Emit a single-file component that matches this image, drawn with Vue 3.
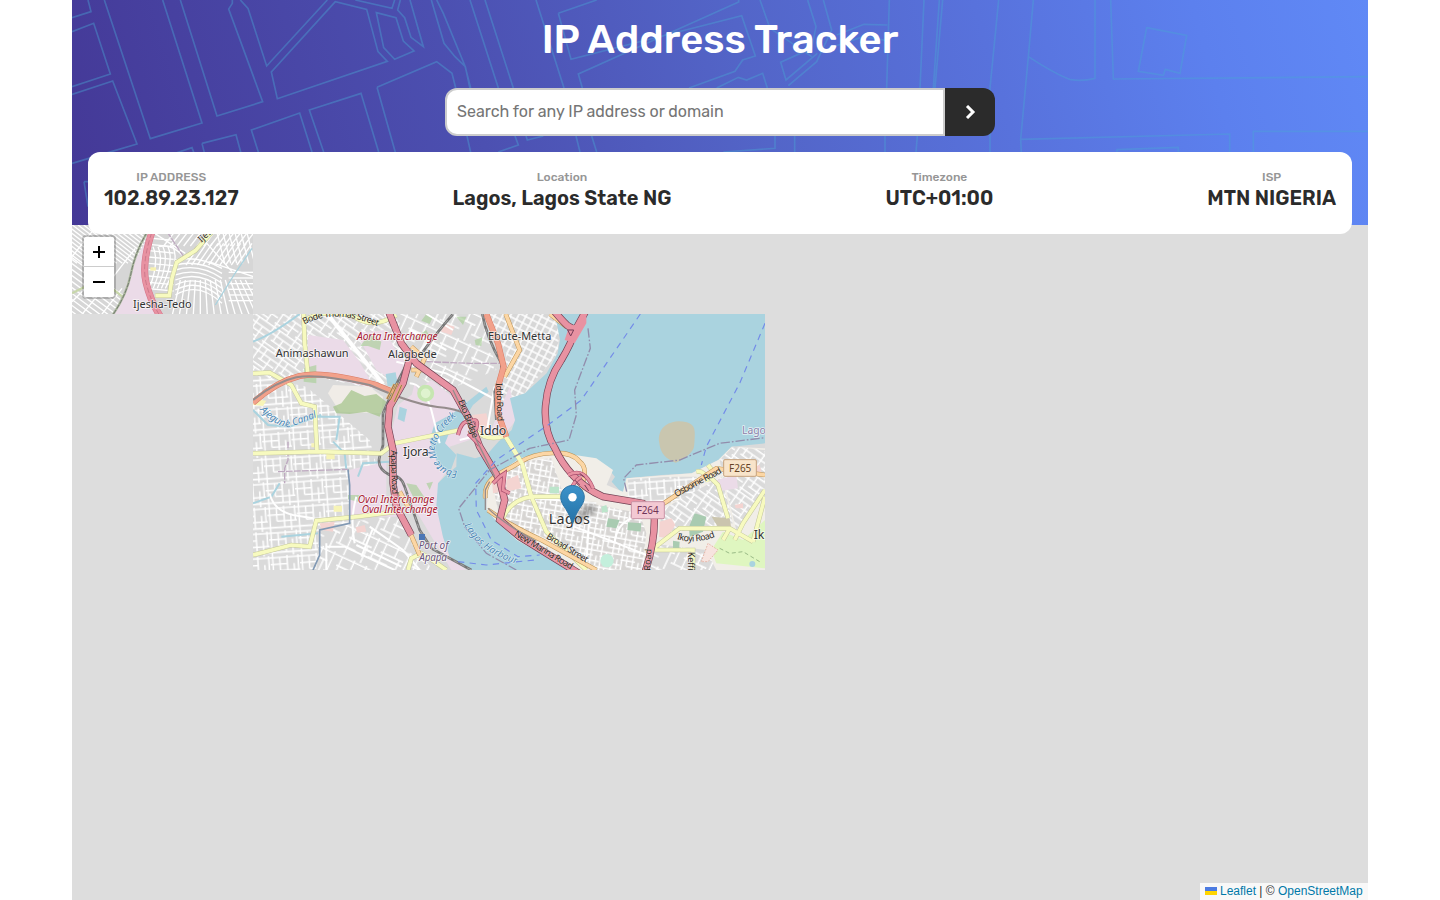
<script setup>
const details = [
  { label: 'IP ADDRESS', value: '102.89.23.127', key: 'ip' },
  { label: 'Location', value: 'Lagos, Lagos State NG', key: 'location' },
  { label: 'Timezone', value: 'UTC+01:00', key: 'timezone' },
  { label: 'ISP', value: 'MTN NIGERIA', key: 'isp' },
]
</script>

<template>
  <main class="page">
    <header class="hero">
      <svg class="hero-lines" viewBox="0 0 3888 675" aria-hidden="true">
        <path d="M0 53L57 35 48 0M0 95L65 70 115 222 0 260M0 283L122 243 195 432 110 457 0 490M97 0L235 416 390 369 272 0M325 0L435 348 572 305 470 27 481 10V0M505 0L528 25 584 198 766 0M790 5L598 216 616 296 946 184 918 155 884 28ZM850 0L960 25 968 0M985 0L977 30 998 53 1017 112 1054 140 1014 0M913 38L972 53 994 123 1026 153 968 178 935 143ZM1078 0L1116 130 1149 170 1180 200 1195 270M1094 0L1114 40 1179 198 1196 264M915 262L1094 185 1140 220 1170 340 1200 475M915 262L975 475M720 456L683 339 538 390 565 475M755 456L712 330 867 280 920 456M390 430L492 404 510 470M390 430L400 470M250 480L360 443 370 470M36 545L48 620M36 545H48" />
        <g transform="translate(1104 0)"><path d="M90 0L175 264M135 0L220 264M288 0L372 264M355 40L470 0M355 40L393 178 905 47 946 168 908 180 885 214 747 264M896 0L896 6 415 222 427 264M830 264L895 232 920 240 968 220 982 264M960 0L990 85 1115 170M1103 0L1128 80 1115 145 1022 187 1038 240 1132 160M1150 0L1175 90 1130 185 1045 257M1342 75L1272 73 1190 105M1342 122L1270 110 1180 140M1348 0L1340 264M1452 0L1440 264M1498 0L1480 264M1508 0L1485 264M225 408L235 435 175 456M258 408L262 420 310 408M408 408L420 456M455 408L470 456M1005 408V445L850 456M1064 408V456M1335 408V456M1432 408L1428 456" /></g>
        <g transform="translate(2940 0)"><path d="M56 0L30 264V456M160 0L145 170 122 418 124 456M145 170Q230 225 272 239 308 245 345 235V0M392 0L400 237 1164 230M500 83L620 106 600 220 556 208 550 226 475 214ZM122 418L749 402V456M411 456V449L595 442V456M1164 394H820V456" transform="translate(-216 0)" /></g>
      </svg>
      <h1>IP Address Tracker</h1>
      <form class="search" @submit.prevent>
        <input type="text" placeholder="Search for any IP address or domain" aria-label="IP address or domain" />
        <button type="submit" aria-label="Search">
          <svg width="11" height="14" viewBox="0 0 11 14"><path d="M2 1l6 6-6 6" fill="none" stroke="#fff" stroke-width="3" /></svg>
        </button>
      </form>
      <section class="details">
        <div v-for="item in details" :key="item.key" class="detail" :class="item.key">
          <span class="label">{{ item.label }}</span>
          <strong>{{ item.value }}</strong>
        </div>
      </section>
    </header>

    <section class="map">
      <svg class="tiles" width="693" height="345" viewBox="0 0 693 345">
        <defs>
          <clipPath id="tile-main"><rect x="181" y="89" width="512" height="256" /></clipPath>
          <clipPath id="tile-corner"><rect width="181" height="89" /></clipPath>
          <pattern id="streets-a" width="88" height="74" patternUnits="userSpaceOnUse" patternTransform="rotate(-4)">
            <rect width="88" height="74" fill="#dadada" />
            <path d="M0 6H88M0 26H48M28 45H88M0 64H88M7 0V74M28 6V45M50 0V64M70 26V74M83 0V45" class="grid" />
          </pattern>
          <pattern id="streets-b" width="75" height="66" patternUnits="userSpaceOnUse" patternTransform="rotate(35)">
            <rect width="75" height="66" fill="#dadada" />
            <path d="M0 5H75M0 24H75M20 43H75M7 0V66M28 5V43M52 24V66M52 0V5M0 59H52" class="grid" />
          </pattern>
          <pattern id="streets-c" width="21" height="21" patternUnits="userSpaceOnUse" patternTransform="rotate(27)">
            <rect width="21" height="21" fill="#d7d7d7" />
            <path d="M0 3H21M3 0V21" class="grid" />
          </pattern>
          <pattern id="streets-d" width="104" height="92" patternUnits="userSpaceOnUse" patternTransform="rotate(25)">
            <rect width="104" height="92" fill="#dadada" />
            <path d="M0 7H104M30 36H104M0 65H64M10 0V65M37 7V92M75 0V36M92 36V92" class="grid" />
          </pattern>
          <pattern id="streets-e" width="64" height="48" patternUnits="userSpaceOnUse" patternTransform="rotate(10)">
            <rect width="64" height="48" fill="#d7d5d3" />
            <path d="M0 4H64M0 19H44M20 35H64M4 0V48M19 4V35M37 0V48M54 19V48" class="grid" />
          </pattern>
          <path id="bode" d="M154 44Q245 -6 372 48" />
          <path id="canal" d="M20 300Q60 345 105 352 145 340 207 315" />
          <path id="creek" d="M613 482Q553 485 545 410 565 350 625 308" />
          <path id="harbour" d="M634 646Q680 732 805 766" />
          <path id="marina" d="M782 676L955 780" />
          <path id="broad" d="M878 684L1005 762" />
          <path id="osborne" d="M1270 561L1409 487" />
          <path id="ikoyi" d="M1271 687Q1330 705 1392 678" />
        </defs>

        <g clip-path="url(#tile-corner)">
          <rect width="181" height="89" fill="#d6d6d6" />
          <g transform="scale(.3333)">
            <g class="corner-streets">
              <path v-for="n in 24" :key="'d' + n" :d="`M${n * 17 - 220} 0l150 115`" />
              <path v-for="n in 16" :key="'s' + n" :d="`M-60 ${n * 18 + 35}l215 160`" />
              <path d="M0 95L60 20 90 0M20 280L120 160 190 70M80 280L150 190M0 230L60 170" />
            </g>
            <path d="M235 0H620V280H245L215 170Z" fill="#d6d6d6" />
            <g class="corner-streets">
              <path v-for="n in 9" :key="'l' + n" :d="`M230 ${n * 19 + 20}l75 7`" />
              <path v-for="n in 5" :key="'v' + n" :d="`M${n * 15 + 228} 65Q${n * 15 + 248} 110 ${n * 12 + 220} 190`" />
              <path v-for="n in 14" :key="'r' + n" :d="`M${n * 21 + 280} 270L${n * 15 + 310} 165`" />
              <path v-for="n in 8" :key="'q' + n" :d="`M310 ${n * 15 + 90}Q380 ${n * 11 + 80} 450 ${n * 15 + 115}`" />
              <path v-for="n in 10" :key="'b' + n" :d="`M${n * 17 + 370} 55l-45 65`" />
              <path v-for="n in 6" :key="'e' + n" :d="`M470 ${n * 17 + 125}H560`" />
              <path v-for="n in 13" :key="'t' + n" :d="`M${n * 20 + 300} 5l-45 58`" />
              <path v-for="n in 8" :key="'u' + n" :d="`M${n * 18 + 415} 15l25 100`" />
              <path d="M240 20L340 85M400 50L480 140M410 110L560 160M260 65Q300 55 335 95" />
            </g>
            <path d="M183 120L230 30 215 110 218 190 248 250 265 270H125L150 220Z" fill="#ebdbe8" />
            <path d="M0 205L60 175M120 190L155 218" stroke="#c8d7ab" stroke-width="7" />
            <path d="M540 70L486 150 430 240" class="stream thin-stream" />
            <path d="M225 22Q190 80 177 145T122 270" fill="none" stroke="#a9b69b" stroke-width="7" />
            <path d="M225 22Q190 80 177 145T122 270" fill="none" stroke="#737971" stroke-width="3" stroke-dasharray="14 4" />
            <path d="M285 20L335 95" class="railway" />
            <path d="M430 10L370 77 314 112 300 160 292 212H250" class="road-case" />
            <path d="M430 10L370 77 314 112 300 160 292 212H250" class="yellow" />
            <path d="M247 0Q207 110 222 172T269 280" class="soft-case" />
            <path d="M247 0Q207 110 222 172T269 280" class="red" />
            <path d="M247 0Q207 110 222 172T269 280" fill="none" stroke="#bd6c81" stroke-width="2" stroke-dasharray="16 8" />
            <path d="M235 127h17v10h-17z" fill="#f7f1ae" />
            <text x="183" y="248" textLength="176" class="place">Ijesha-Tedo</text>
            <text transform="translate(388 53) rotate(-42)" class="road-name">Ijesha</text>
          </g>
        </g>

        <g clip-path="url(#tile-main)">
          <g transform="translate(181 85) scale(.33333)">
            <rect y="12" width="1536" height="768" fill="#dadada" />
            <path d="M0 12H430L470 150 380 240 160 195 0 260Z" fill="url(#streets-b)" />
            <path d="M0 195L160 230 350 390 380 500 280 660 200 780H0Z" fill="url(#streets-a)" />
            <path d="M430 12H690L730 180 560 250 470 170Z" fill="url(#streets-d)" />
            <path d="M200 650L435 615 500 730 540 780H190Z" fill="url(#streets-d)" />
            <path d="M700 12H922L914 130 816 250 740 300 760 130Z" fill="url(#streets-c)" />

            <!-- land use -->
            <g class="industrial">
              <path d="M165 75L270 90 320 155 365 235 165 190Z" />
              <path d="M310 70L395 60 425 115 455 150 435 220 370 180Z" />
              <path d="M310 475L400 455V590L440 620H290V480Z" />
              <path d="M435 285L535 210 650 300 650 390 590 410 585 480 555 520 555 590 570 680 590 740 640 780 595 780 500 620 430 540 415 370Z" />
              <path d="M770 230L790 330 740 390 710 370Z" />
              <path d="M485 220L530 330 450 360Z" />
            </g>
            <path d="M240 225L350 230 390 260 385 310 260 305 225 250Z" fill="#f0ece7" />
            <g fill="#add19e" opacity=".7">
              <path d="M240 290L265 280 295 240 335 258 370 252 400 275 380 320 340 305 290 312 250 310Z" fill="#a3c488" />
              <path d="M153 175L190 165 190 220 152 215ZM322 108L350 70 385 95 380 120 345 108ZM475 90L520 60 535 90ZM520 12L540 20 530 42 505 32ZM665 90L688 82 685 108 668 105Z" />
              <path d="M460 520L490 525 520 570 485 570ZM520 520L540 515 530 540ZM610 20L640 20 630 45ZM285 555L325 555 315 575 285 568Z" />
            </g>
            <g fill="#f4d4d1"><path d="M200 640L245 635 240 665 205 660ZM308 652L335 645 340 665 312 668ZM570 40L605 50 595 75 565 65ZM655 315L700 310 715 375 680 370Z" /></g>
            <g fill="#f7f4b7"><path d="M220 430h25v18h-25zM175 400h20v12h-20zM242 587h25v18h-25zM5 268l35 4-10 16-30-3z" /></g>

            <!-- water -->
            <path class="water" d="M906 12L921 90 914 130 881 190 816 250 771 265 786 330 776 360 736 395 701 435 666 445 611 430 610 470 585 490 555 520 550 590 570 680 590 740 650 780H981L881 740 791 690 736 640 701 600 693 550 706 510 801 445 901 425 981 440 1061 470 1086 500 1076 515 1106 548 1118 545 1121 505 1226 495 1316 490 1396 450 1436 410 1536 400V12Z" />
            <path class="water" d="M530 390L545 340 600 310 650 270 700 230 707 245 660 285 620 350 590 365 576 400 610 435 590 490 555 465Z" />
            <path class="water" d="M440 290l22 8-8 38-20-9zM398 192l30-5 8 45-32-4z" />
            <path d="M0 95Q55 75 140 12M165 320H260L250 390M315 500L330 460 410 455M0 580L55 560 80 520M195 670L85 680M240 395L275 430 280 478" class="stream" />
            <path d="M0 300L45 345 110 350 205 315" class="stream" />

            <!-- Lagos Island and Ikoyi -->
            <path d="M706 510L801 445 901 425 1030 445 1080 480 1061 525 1110 545 1120 505 1316 490 1396 450 1436 410 1536 415V780H975L881 740 791 690 736 640 701 600Z" fill="#f1eee8" />
            <path d="M718 520L800 455 895 445 930 550 1010 580 1160 610 1180 670 1170 780H1010L890 690 740 625Z" fill="url(#streets-e)" />
            <path d="M1125 507L1230 500 1330 500 1350 540 1225 590 1125 560Z" fill="url(#streets-a)" />
            <path d="M1225 600L1405 500 1440 640 1320 655 1220 680Z" fill="url(#streets-b)" />
            <path d="M1400 450L1440 410 1536 420V560L1450 660 1410 500Z" fill="url(#streets-b)" />
            <path d="M1190 700L1360 720 1390 780H1190Z" fill="url(#streets-d)" />
            <path d="M1410 665L1470 690 1536 630V775L1390 760 1375 720Z" fill="#dff6c0" />
            <g fill="#a9cbb1"><path d="M1308 650L1325 610 1360 620 1350 665 1310 680ZM1065 625L1100 630 1090 655 1060 650ZM1125 637L1165 640 1163 665 1123 660ZM1260 692L1280 695 1278 725 1260 725Z" /></g>
            <path d="M1376 620L1430 625 1435 655 1400 660Z" fill="#cbc5ae" />
            <path d="M1390 510l60-15 5 40-55 8z" fill="#ebdbe8" />
            <g fill="#f4d4d1"><path d="M760 510l35-15 10 40-45 10zM718 520l22-5 5 30-25 5zM1220 635l35-10 12 20-25 40-24-5zM1445 585l25-5v15h-22zM1500 470l20-5 5 20-20 2z" /></g>
            <path d="M890 530h28v20h-28zM1045 590l15-5 5 20-18 3z" fill="#bce5cb" />
            <circle cx="1062" cy="752" r="20" fill="#c4efdc" />
            <circle cx="1498" cy="762" r="9" fill="#aad3df" />
            <path d="M1345 755l20-55 30 20-30 35z" class="hatch" />
            <path d="M1219 400C1213 375 1225 345 1258 337Q1275 331 1302 337C1328 345 1327 362 1324 402L1322 415C1312 435 1290 450 1268 458 1240 448 1222 430 1219 400Z" fill="#c9c6af" />

            <!-- secondary streets -->
            <g class="street">
              <path d="M395 12L480 145 600 12M430 155L580 190 730 270M470 60L580 120M520 12L600 60" />
              <path d="M50 550Q60 600 120 615L180 625M310 560Q290 630 305 700M220 710L275 710 370 755 425 780M350 650L450 720 500 780M220 780V700M310 705L445 770M325 740L360 655" />
              <path d="M900 625L1080 695 1180 735M1085 700Q1090 635 1150 620M1010 600L1000 760M840 565L1030 580" />
              <path d="M535 300Q510 220 470 220M535 300L560 400M620 390L700 370 725 230" />
            </g>
            <path d="M228 18L390 222" class="avenue" />
            <circle cx="518" cy="250" r="20" fill="#dff3cf" stroke="#c6e6b1" stroke-width="11" />

            <g class="railway"><path d="M105 395V450L95 475V520M520 155L650 160 760 160" /></g>
            <g class="rail"><path d="M600 12Q545 75 510 125M688 12Q700 80 745 160V190L725 245 730 330M465 155Q410 260 390 310V405L380 440Q370 475 410 495 445 495 455 530L500 660 535 715 655 780" /></g>
            <g class="rail-dash"><path d="M600 12Q545 75 510 125M688 12Q700 80 745 160V190L725 245 730 330M465 155Q410 260 390 310V405L380 440Q370 475 410 495 445 495 455 530L500 660 535 715 655 780" /></g>

            <!-- local main roads -->
            <g v-for="layer in ['road-case', 'yellow']" :key="layer" :class="layer">
              <path d="M152 12L155 100 165 195M150 35Q200 -5 300 18 360 60 430 15M0 190L50 188 115 225 145 280 185 290 192 425M0 430L195 425 385 430 425 400 620 360M0 735L115 705 170 710 190 632 315 620 430 605M465 780L475 745 505 730 530 745 580 780" />
              <path d="M665 360Q700 395 757 378L807 460 835 560 880 665 1000 780M752 620Q775 570 835 560H935M1195 720L1280 655 1430 655 1500 695M1190 720H1320V780M1370 500L1395 525 1425 625M1536 540L1470 640 1445 690M1430 655L1410 690M1500 695L1536 560M1330 485Q1355 480 1365 515M1365 465L1385 490" />
            </g>
            <g v-for="layer in ['orange-case', 'orange']" :key="layer" :class="layer">
              <path d="M758 12L800 120 755 200M475 180L520 180M440 545L465 590M470 665L500 735M891 12L940 50M697 565C690 500 750 490 801 456 850 425 950 415 980 455 1008 475 990 515 980 550M705 600Q760 640 865 690L1030 780M1225 585L1390 475 1536 495M475 110L515 145 490 200" />
            </g>
            <path d="M757 378L807 460 835 560" class="yellow" />

            <!-- trunk roads -->
            <path d="M0 278Q70 215 140 198T370 225L430 250" class="coral-case" />
            <path d="M0 278Q70 215 140 198T370 225L430 250" class="coral" />
            <path d="M0 270Q70 215 130 202T350 225C450 270 520 290 575 293 620 300 635 305 650 340" class="motor-rail" />
            <path d="M700 12L735 100 752 170 735 230 735 310 760 380" class="coral-case" />
            <path d="M700 12L735 100 752 170 735 230 735 310 760 380" class="coral" />
            <g v-for="layer in ['red-case', 'red']" :key="layer" :class="layer">
              <path d="M405 0L445 100 490 160 600 240 650 330 680 410 740 510 755 570 740 630 800 680 981 792" />
              <path d="M470 145L450 220 410 290 405 350 420 420V520L430 590 475 675" />
              <path d="M901 0Q930 35 944 47L967 60 1000 0M967 60Q955 100 925 150C870 230 860 345 906 415 930 470 980 530 1050 560L1170 580 1200 610M1200 580Q1215 670 1175 790" />
            </g>
            <g class="ramp-case"><path d="M615 375Q625 330 650 335 680 320 670 355L650 375 680 405M720 520L740 500 755 490 750 540 770 550M945 495Q995 470 1020 535M955 540Q960 515 985 500" /></g>
            <g class="ramp"><path d="M615 375Q625 330 650 335 680 320 670 355L650 375 680 405M720 520L740 500 755 490 750 540 770 550M945 495Q995 470 1020 535M955 540Q960 515 985 500" /></g>
            <path d="M928 20Q950 55 972 43L1000 10 1000 40 965 100 935 90 945 60Z" fill="#e892a2" />
            <path d="M944 60h18l-9 18zM965 510l15 15M980 490l15 12M995 525l12 18M960 535l10 8" fill="#e892a2" stroke="#733c58" stroke-width="3" />
            <path d="M412 270l22-50M424 275l22-50M402 267l22-45" stroke="#e9b678" stroke-width="7" />
            <path d="M412 270l22-50M424 275l22-50M402 267l22-45" stroke="#68543a" stroke-width="2" />
            <path d="M600 240L680 410 725 500" class="motor-rail thin" />
            <path d="M697 600V540L710 515M705 595Q750 640 850 694" class="motor-rail thin" />

            <!-- ferries and boundaries -->
            <g class="ferry"><path d="M1162 12L985 270 885 345 730 450 668 520 670 600 715 690 795 740 860 735M1536 40L1460 220 1360 410 1345 465M615 755L700 765 845 750" /></g>
            <g class="boundary"><path d="M1005 55L1012 115 965 240 970 315 948 390 830 415 710 480 617 595 635 650 700 730 790 780M1121 545L1112 505 1150 465 1280 450 1400 400 1536 383" /></g>
            <path d="M285 478L290 525V640L200 660V735L180 780" class="district" />
            <path d="M75 485L285 478" class="railway" />
            <path d="M1400 715L1430 730 1470 725 1520 755" fill="none" stroke="#99ba86" stroke-width="3" stroke-dasharray="12 8" />

            <!-- labels -->
            <g class="place">
              <text x="68" y="140" textLength="219">Animashawun</text>
              <text x="405" y="143" textLength="146">Alagbede</text>
              <text x="705" y="90" textLength="190">Ebute-Metta</text>
              <text x="681" y="374" textLength="79" class="mid">Iddo</text>
              <text x="450" y="438" textLength="77" class="mid">Ijora</text>
              <text x="887" y="643" textLength="124" class="city">Lagos</text>
              <text x="1502" y="687" class="mid">Ikoyi</text>
            </g>
            <g class="junction">
              <text x="312" y="89" textLength="242">Aorta Interchange</text>
              <text x="314" y="578" textLength="230">Oval Interchange</text>
              <text x="326" y="608" textLength="228">Oval Interchange</text>
            </g>
            <g class="road-name">
              <text><textPath href="#bode" textLength="228">Bode Thomas Street</textPath></text>
              <text transform="translate(615 273) rotate(68)" textLength="122">Eko Bridge</text>
              <text transform="translate(729 219) rotate(88)" textLength="115">Iddo Road</text>
              <text transform="translate(413 421) rotate(88)" textLength="132">Apapa Road</text>
              <text><textPath href="#marina" textLength="200">New Marina Road</textPath></text>
              <text><textPath href="#broad" textLength="142">Broad Street</textPath></text>
              <text><textPath href="#osborne" textLength="156">Osborne Road</textPath></text>
              <text><textPath href="#ikoyi" textLength="118">Ikoyi Road</textPath></text>
              <text transform="translate(1192 782) rotate(-87)">Road</text>
              <text transform="translate(1306 725) rotate(90)">Keffi</text>
            </g>
            <g class="water-name">
              <text><textPath href="#canal" textLength="194">Ajegunle Canal</textPath></text>
              <text><textPath href="#creek" textLength="225">Ebute Metto Creek</textPath></text>
              <text><textPath href="#harbour" textLength="200">Lagos Harbour</textPath></text>
            </g>
            <rect x="498" y="672" width="18" height="18" fill="#4b77b5" />
            <g class="port"><text x="497" y="718" textLength="89">Port of</text><text x="499" y="754" textLength="83">Apapa</text></g>
            <text x="1467" y="371" class="lagoon">Lagos</text>
            <g class="shield"><rect x="1135" y="575" width="99" height="51" rx="4" /><text x="1151" y="612" textLength="66">F264</text></g>
            <g class="shield tan"><rect x="1412" y="449" width="98" height="50" rx="4" /><text x="1428" y="486" textLength="67">F265</text></g>
          </g>
        </g>
      </svg>

      <svg class="marker" width="48" height="43" viewBox="0 0 48 43" aria-label="Marker">
        <defs>
          <linearGradient id="pin" x2="0" y2="1"><stop stop-color="#3d93ca" /><stop offset="1" stop-color="#2371a6" /></linearGradient>
          <filter id="soft"><feGaussianBlur stdDeviation="2" /></filter>
        </defs>
        <path d="M13 39L23 22Q37 14 36 27Z" fill="#111" opacity=".3" filter="url(#soft)" />
        <path d="M12.5.5C5.5.5.7 6 .7 12.2.7 17 3.5 20.6 5.5 23.5 8.5 28 10.5 33 12.5 39c2-6 4-11 7-15.500 2-2.900 4.800-6.500 4.800-11.300C24.300 6 19.500.5 12.500.5Z" fill="url(#pin)" stroke="#2e75a7" />
        <circle cx="12.500" cy="12.200" r="4.200" fill="#fff" />
      </svg>

      <div class="zoom">
        <button aria-label="Zoom in"><svg width="14" height="14" viewBox="0 0 14 14"><path d="M7 1v12M1 7h12" /></svg></button>
        <button aria-label="Zoom out"><svg width="14" height="14" viewBox="0 0 14 14"><path d="M1 7h12" /></svg></button>
      </div>
      <footer class="attribution">
        <svg width="12" height="8" viewBox="0 0 12 8"><path fill="#4c7be1" d="M0 0h12v4H0z" /><path fill="#ffd500" d="M0 4h12v4H0z" /></svg>
        <a>Leaflet</a> | © <a>OpenStreetMap</a>
      </footer>
    </section>
  </main>
</template>

<style>
body { margin: 0; background: #fff; overflow: hidden; }
</style>

<style scoped>
* { box-sizing: border-box; }
.page { width: 1296px; height: 900px; margin: 0 auto; font-family: Rubik, Roboto, sans-serif; color: #2b2b2b; }
.hero { position: relative; height: 225px; padding: 16px 16px 0; background: linear-gradient(74deg, #443896 0%, #4c50b1 32%, #5365c8 53%, #5872dc 71%, #5c80ee 87%, #6089f6 100%); }
.hero-lines { position: absolute; inset: 0; width: 1296px; height: 225px; fill: none; stroke: #4aa4d3; stroke-width: 5; stroke-opacity: .42; }
h1 { position: relative; margin: 0; height: 47px; color: #fff; font-size: 40px; line-height: 47px; font-weight: 500; text-align: center; white-space: nowrap; }
.search { position: relative; display: flex; width: 550px; height: 48px; margin: 25px auto 16px; }
.search input { width: 500px; height: 48px; padding: 0 10px 1px; border: 2px solid #ccc; border-radius: 12px 0 0 12px; outline: 0; background: #fff; font: 400 16px Rubik, Roboto, sans-serif; }
.search input::placeholder { color: #757575; }
.search button { display: grid; place-items: center; width: 50px; height: 48px; padding: 0; border: 0; border-radius: 0 12px 12px 0; background: #2b2b2b; }
.details { position: relative; z-index: 3; display: flex; justify-content: space-between; height: 82px; padding: 18px 16px; border-radius: 12px; background: #fff; }
.detail { display: flex; flex-direction: column; align-items: center; white-space: nowrap; }
.label { height: 14px; color: #969696; font-size: 12px; line-height: 14px; font-weight: 500; }
.detail strong { height: 24px; margin-top: 2px; font-size: 20px; line-height: 24px; font-weight: 600; }
.map { position: relative; height: 675px; background: #ddd; overflow: hidden; }
.tiles { display: block; font-family: "Noto Sans", sans-serif; }
.tiles text { paint-order: stroke; stroke: #fff; stroke-width: 5px; stroke-opacity: .7; stroke-linejoin: round; }
.grid { fill: none; stroke: #fff; stroke-width: 4.500; }
.corner-streets { fill: none; stroke: #fff; stroke-width: 4; }
.industrial { fill: #ebdbe8; }
.water { fill: #aad3df; }
.stream { fill: none; stroke: #aad3df; stroke-width: 6; }
.thin-stream { stroke-width: 4; }
.street { fill: none; stroke: #fff; stroke-width: 6; }
.avenue { fill: none; stroke: #fff; stroke-width: 12; }
.rail { fill: none; stroke: #777; stroke-width: 8; }
.rail-dash { fill: none; stroke: #bbb; stroke-width: 2; stroke-dasharray: 14 9; }
.railway { fill: none; stroke: #bea9c0; stroke-width: 4; stroke-dasharray: 20 4; }
.road-case { fill: none; stroke: #c3c69a; stroke-width: 14; }
.yellow { fill: none; stroke: #f7fabf; stroke-width: 11; }
.orange-case { fill: none; stroke: #b89155; stroke-width: 14; }
.orange { fill: none; stroke: #fcd6a4; stroke-width: 11; }
.coral-case { fill: none; stroke: #d97a63; stroke-width: 18; }
.coral { fill: none; stroke: #f2a18b; stroke-width: 15; }
.red-case { fill: none; stroke: #704153; stroke-width: 22; }
.soft-case { fill: none; stroke: #d47489; stroke-width: 21; }
.red { fill: none; stroke: #e892a2; stroke-width: 18; }
.ramp-case { fill: none; stroke: #a94e6d; stroke-width: 12; }
.ramp { fill: none; stroke: #e892a2; stroke-width: 8; }
.motor-rail { fill: none; stroke: #958c8c; stroke-width: 6; }
.thin { stroke-width: 4; }
.ferry { fill: none; stroke: #738be8; stroke-width: 3.500; stroke-dasharray: 19 16; }
.boundary { fill: none; stroke: #928dac; stroke-width: 4; stroke-dasharray: 28 6 5 6; }
.district { fill: none; stroke: #8199b4; stroke-width: 5; }
.hatch { fill: #f7e4df; stroke: #e5b6a8; stroke-width: 3; stroke-dasharray: 5 4; }
.place { fill: #333; font-size: 33px; }
.place .mid { font-size: 37px; }
.place .city { font-size: 43px; }
.junction { fill: #a82034; font-size: 31px; font-style: italic; }
.road-name { fill: #2c2619; font-size: 27px; }
.tiles .road-name text, .tiles text.road-name { stroke-width: 2px; stroke-opacity: .4; }
.water-name { fill: #4b88b6; font-size: 30px; font-style: italic; }
.tiles .water-name text { stroke-width: 3px; }
.port { fill: #6c557b; font-size: 30px; font-style: italic; }
.lagoon { fill: #8d82a9; font-size: 31px; }
.shield { fill: #703457; font-size: 30px; }
.shield rect { fill: #f3c9d3; stroke: #c893a5; stroke-width: 3; }
.tiles .shield text { stroke: none; }
.shield.tan { fill: #654226; }
.shield.tan rect { fill: #f8e4ca; stroke: #c6a37d; }
.marker { position: absolute; left: 488px; top: 260px; }
.zoom { position: absolute; left: 10px; top: 10px; width: 34px; border: 2px solid rgba(0,0,0,.2); border-radius: 4px; background-clip: padding-box; }
.zoom button { display: grid; place-items: center; width: 30px; height: 30px; padding: 0; border: 0; background: #fff; }
.zoom button:first-child { border-bottom: 1px solid #ccc; border-radius: 2px 2px 0 0; }
.zoom button:last-child { border-radius: 0 0 2px 2px; }
.zoom path { stroke: #000; stroke-width: 2; }
.attribution { position: absolute; right: 0; bottom: 0; width: 168px; height: 17px; padding: 0 5px; background: rgba(255,255,255,.8); color: #333; font: 12px/17px "Liberation Sans", Arial, sans-serif; white-space: nowrap; }
.attribution svg { margin-right: 3px; }
.attribution a { color: #0078a8; }
</style>
